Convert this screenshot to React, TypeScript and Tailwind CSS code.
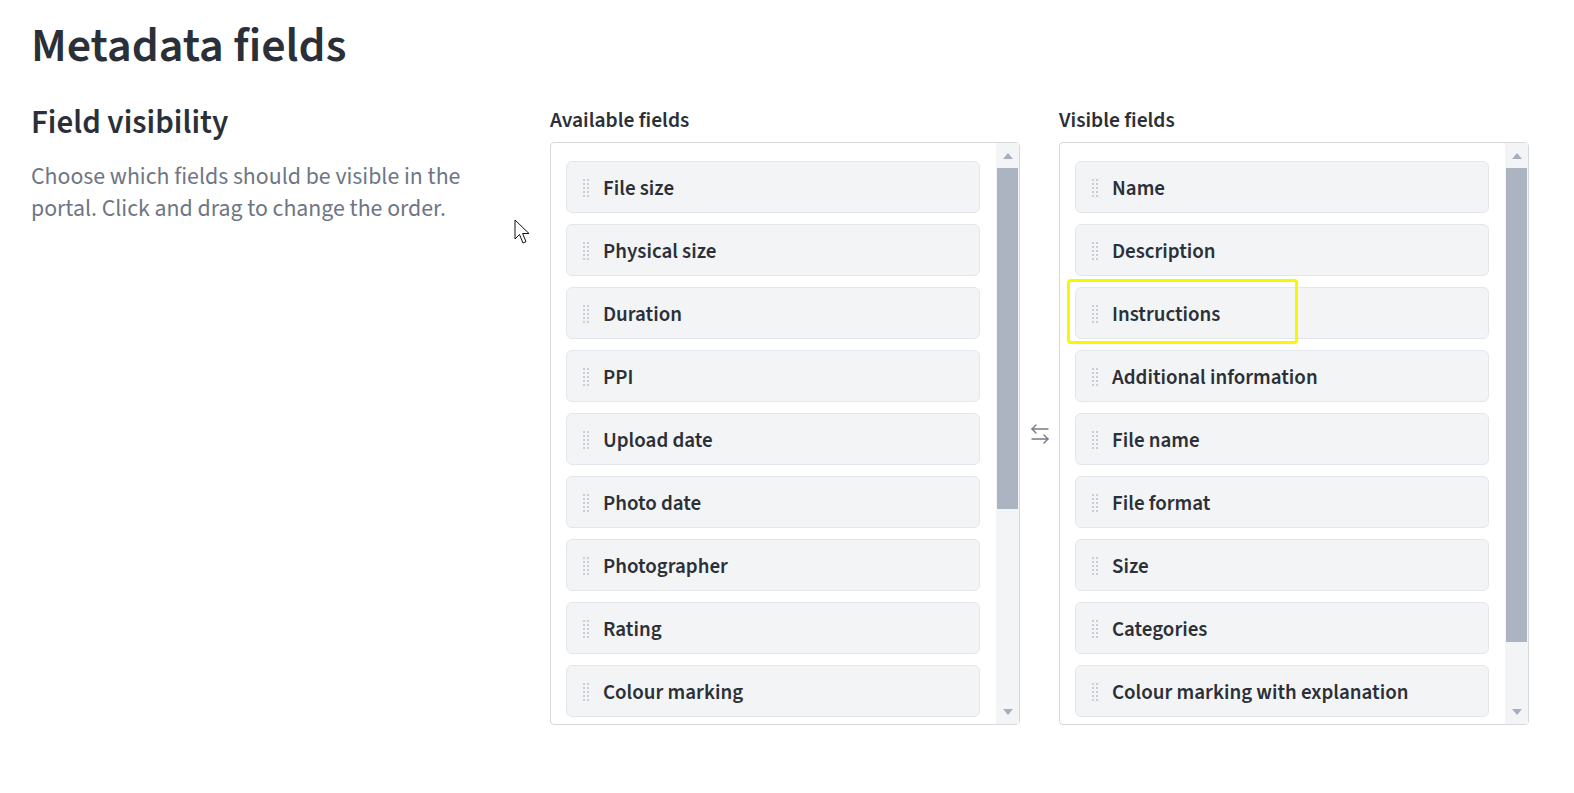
import { ArrowLeftRight } from "lucide-react";

const available = [
  "File size",
  "Physical size",
  "Duration",
  "PPI",
  "Upload date",
  "Photo date",
  "Photographer",
  "Rating",
  "Colour marking",
];

const visible = [
  "Name",
  "Description",
  "Instructions",
  "Additional information",
  "File name",
  "File format",
  "Size",
  "Categories",
  "Colour marking with explanation",
];

function DragHandle() {
  return (
    <div className="grid grid-cols-2 gap-x-[2px] gap-y-[2px] w-[6px] shrink-0 mt-[2px]">
      {Array.from({ length: 10 }).map((_, i) => (
        <span key={i} className="block w-[2px] h-[2px] bg-[#c9ced6]" />
      ))}
    </div>
  );
}

function FieldItem({ label }: { label: string }) {
  return (
    <div className="h-[52px] shrink-0 flex items-center gap-[14px] pl-[16px] bg-[#f3f4f6] border border-[#e3e6ea] rounded-[6px]">
      <DragHandle />
      <span className="pt-[3px] text-[21px] font-semibold text-[#2b3038]">{label}</span>
    </div>
  );
}

// fake scrollbar, thumb height given in px
function Scrollbar({ thumb }: { thumb: number }) {
  return (
    <div className="w-[23px] shrink-0 bg-[#f3f4f6] flex flex-col">
      <div className="h-[25px] flex items-center justify-center">
        <span className="block w-0 h-0 border-l-[5px] border-r-[5px] border-b-[6px] border-l-transparent border-r-transparent border-b-[#a7afbc]" />
      </div>
      <div className="flex-1 px-[1px]">
        <div className="w-full bg-[#adb4c1]" style={{ height: thumb }} />
      </div>
      <div className="h-[25px] flex items-center justify-center">
        <span className="block w-0 h-0 border-l-[5px] border-r-[5px] border-t-[6px] border-l-transparent border-r-transparent border-t-[#a7afbc]" />
      </div>
    </div>
  );
}

function FieldList({
  title,
  items,
  thumb,
  children,
}: {
  title: string;
  items: string[];
  thumb: number;
  children?: React.ReactNode;
}) {
  return (
    <div className="w-[470px] shrink-0">
      <h3 className="mt-[3px] text-[21.5px] font-semibold text-[#2b3038] leading-[28px] mb-[7px]">{title}</h3>
      <div className="relative h-[583px] flex border border-[#d5d9de] rounded-[4px] bg-white">
        <div className="flex-1 overflow-hidden pl-[15px] pr-[16px] pt-[18px] flex flex-col gap-[11px]">
          {items.map((it) => (
            <FieldItem key={it} label={it} />
          ))}
        </div>
        <Scrollbar thumb={thumb} />
        {children}
      </div>
    </div>
  );
}

export default function App() {
  return (
    <div
      className="relative min-h-[793px] bg-white pl-[31px] pt-[15px] text-[#2b3038]"
      style={{ fontFamily: '"Source Sans 3", "Source Sans Pro", Lato, sans-serif' }}
    >
      <h1 className="text-[48px] font-semibold leading-[62px]">Metadata fields</h1>

      <div className="flex mt-[27px]">
        <div className="w-[519px] shrink-0">
          <h2 className="text-[33px] font-semibold leading-[38px]">Field visibility</h2>
          <p className="mt-[19px] w-[470px] text-[23.8px] leading-[32px] text-[#6e7685]">
            Choose which fields should be visible in the portal. Click and drag to change the order.
          </p>
        </div>

        <FieldList title="Available fields" items={available} thumb={341} />

        <div className="w-[39px] shrink-0 flex items-center justify-center pt-[38px]">
          <ArrowLeftRight size={24} strokeWidth={1.4} className="text-[#747b87]" />
        </div>

        <FieldList title="Visible fields" items={visible} thumb={474}>
          {/* highlight box over "Instructions" */}
          <div className="absolute left-[7px] top-[136px] w-[231px] h-[65px] border-[3px] border-[#f7f700] rounded-[4px] pointer-events-none" />
        </FieldList>
      </div>

      {/* mouse cursor from the screenshot */}
      <svg
        className="absolute left-[514px] top-[219px]"
        width="20"
        height="28"
        viewBox="0 0 20 28"
      >
        <path
          d="M1 1 L1 20 L5.5 15.5 L9 24 L12 22.7 L8.6 14.5 L15 14.5 Z"
          fill="white"
          stroke="#111"
          strokeWidth="1"
          strokeLinejoin="miter"
        />
      </svg>
    </div>
  );
}
